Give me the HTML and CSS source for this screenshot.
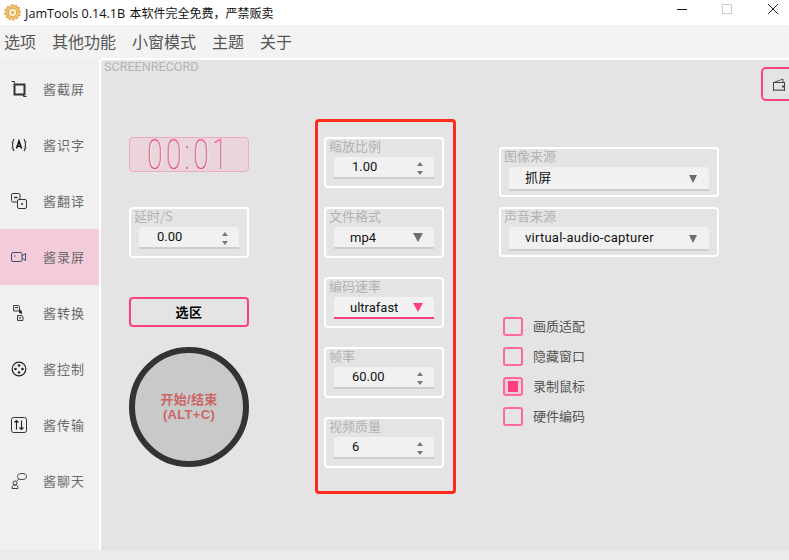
FILE: index.html
```html
<!DOCTYPE html>
<html lang="zh">
<head>
<meta charset="utf-8">
<title>JamTools</title>
<link rel="stylesheet" href="styles.css">
</head>
<body>
<div class="app">
  <header class="titlebar">
    <svg class="logo" viewBox="0 0 18 18"><path d="M9 0l1.600 2.400L13 1l.6 2.800 2.800-.2-.8 2.800 2.400 1.300-2 2.100 1.400 2.400-2.800.6-.2 2.800-2.700-.8L10 17.600l-2-2-2.300 1.400-.7-2.700-2.800.1.700-2.800L0 10.300l2-2-1.200-2.600 2.800-.5L3.500 2.400l2.700.7z" fill="#f6c468" stroke="#d08a28" stroke-width=".7"/><circle cx="9" cy="9" r="4.500" fill="#fff3cf" stroke="#cf9a48"/><circle cx="9" cy="9" r="1.800" fill="#e8b860"/></svg>
    <span class="app-title">JamTools 0.14.1B <span class="app-note">本软件完全免费，严禁贩卖</span></span>
    <div class="win-controls">
      <svg class="win-min" viewBox="0 0 10 1"><path d="M0 .5h10" stroke="#111"/></svg>
      <svg class="win-max" viewBox="0 0 10 10"><path d="M.5.500h9v9h-9z" fill="none" stroke="#ccc"/></svg>
      <svg class="win-close" viewBox="0 0 10 10"><path d="M0 0l10 10M10 0L0 10" stroke="#222" stroke-width="1"/></svg>
    </div>
  </header>
  <nav class="menubar">
    <span>选项</span><span>其他功能</span><span>小窗模式</span><span>主题</span><span>关于</span>
  </nav>
  <div class="body">
    <aside class="sidebar">
      <div class="side-item">
        <svg class="ico" viewBox="0 0 16 16"><path d="M3.500 3.500h10v10h-10z" fill="none" stroke="#333" stroke-width="2"/><path d="M.5 .5h3v2M15.500 15.500h-3v-2" fill="none" stroke="#333"/></svg>
        <span>酱截屏</span>
      </div>
      <div class="side-item">
        <svg class="ico" viewBox="0 0 16 16"><path d="M3 2C1 5 1 11 3 14M13 2c2 3 2 9 0 12" fill="none" stroke="#333" stroke-width="1.200"/><path d="M5.500 11.500L8 4l2.500 7.500M6.300 9.300h3.400" fill="none" stroke="#111" stroke-width="1.600"/><path d="M0 5h3M0 11h3M13 5h3M13 11h3" stroke="#888"/></svg>
        <span>酱识字</span>
      </div>
      <div class="side-item">
        <svg class="ico" viewBox="0 0 16 16"><rect x=".5" y=".5" width="8.500" height="8.500" rx="1.500" fill="none" stroke="#333"/><rect x="6.500" y="6.500" width="9" height="9" rx="1.500" fill="#f0f0f0" stroke="#333"/><path d="M3 4.500h3.500M10 11h2" stroke="#333" stroke-width="1.500"/></svg>
        <span>酱翻译</span>
      </div>
      <div class="side-item active">
        <svg class="ico" viewBox="0 0 16 16"><rect x=".5" y="3.500" width="10.500" height="9" rx="1.500" fill="none" stroke="#3f4d70"/><path d="M11 7l3.500-2.500v7L11 9" fill="none" stroke="#3f4d70"/><path d="M3 7h1.500" stroke="#3f4d70"/></svg>
        <span>酱录屏</span>
      </div>
      <div class="side-item">
        <svg class="ico" viewBox="0 0 16 16"><path d="M2.500.5h5l1 1.500v4h-6zM6.500 10.500h4.500l1 1.500v3.500H6.500z" fill="#ddd" stroke="#444"/><path d="M8 4.500l.2 3.500 3 1-.7-3.500z" fill="#222"/><path d="M4 2.500h3M8 13h2" stroke="#444"/></svg>
        <span>酱转换</span>
      </div>
      <div class="side-item">
        <svg class="ico" viewBox="0 0 16 16"><circle cx="8" cy="8" r="6.800" fill="none" stroke="#222" stroke-width="1.200"/><circle cx="8" cy="4.500" r="1.300" fill="#222"/><circle cx="8" cy="11.500" r="1.300" fill="#222"/><circle cx="4.500" cy="8" r="1.300" fill="#222"/><circle cx="11.500" cy="8" r="1.300" fill="#222"/></svg>
        <span>酱控制</span>
      </div>
      <div class="side-item">
        <svg class="ico" viewBox="0 0 16 16"><rect x=".5" y=".5" width="15" height="15" rx="2" fill="none" stroke="#333"/><path d="M5.500 12.500v-9M3.500 5.500l2-2 2 2M10.500 3.500v9M8.500 10.500l2 2 2-2" fill="none" stroke="#222" stroke-width="1.100"/></svg>
        <span>酱传输</span>
      </div>
      <div class="side-item">
        <svg class="ico" viewBox="0 0 16 16"><ellipse cx="11" cy="3.500" rx="4.500" ry="3" fill="none" stroke="#444"/><path d="M7.500 6L6 8" stroke="#444"/><circle cx="4" cy="10" r="2" fill="none" stroke="#444"/><path d="M1 15.500c0-2.500 1-3.500 3-3.500s3 1 3 3.500z" fill="none" stroke="#444"/></svg>
        <span>酱聊天</span>
      </div>
    </aside>
    <main class="panel">
      <div class="panel-title">SCREENRECORD</div>
      <button class="corner-tab" type="button">
        <svg viewBox="0 0 12 14"><path d="M.5 5.500L10 2v3.500" fill="none" stroke="#555"/><rect x=".5" y="5.500" width="11" height="8" fill="none" stroke="#444"/><path d="M1 13h10" stroke="#888" stroke-width="1.500"/><rect x="9" y="8.500" width="2" height="2" fill="#444"/></svg>
      </button>
      <div class="columns">
        <section class="col-left">
          <div class="lcd"><span class="lcd-text">00:01</span></div>
          <div class="group">
            <div class="group-label">延时/S</div>
            <div class="field"><span>0.00</span><i class="spin"><b class="up"></b><b class="down"></b></i></div>
          </div>
          <button class="area-btn" type="button">选区</button>
          <button class="round-btn" type="button">开始/结束<br>(ALT+C)</button>
        </section>
        <section class="col-mid">
          <div class="group">
            <div class="group-label">缩放比例</div>
            <div class="field"><span>1.00</span><i class="spin"><b class="up"></b><b class="down"></b></i></div>
          </div>
          <div class="group">
            <div class="group-label">文件格式</div>
            <div class="field select"><span>mp4</span><i class="caret"></i></div>
          </div>
          <div class="group">
            <div class="group-label">编码速率</div>
            <div class="field select focus"><span>ultrafast</span><i class="caret"></i></div>
          </div>
          <div class="group">
            <div class="group-label">帧率</div>
            <div class="field"><span>60.00</span><i class="spin"><b class="up"></b><b class="down"></b></i></div>
          </div>
          <div class="group">
            <div class="group-label">视频质量</div>
            <div class="field"><span>6</span><i class="spin"><b class="up"></b><b class="down"></b></i></div>
          </div>
        </section>
        <section class="col-right">
          <div class="group wide">
            <div class="group-label">图像来源</div>
            <div class="field select"><span>抓屏</span><i class="caret small"></i></div>
          </div>
          <div class="group wide">
            <div class="group-label">声音来源</div>
            <div class="field select"><span>virtual-audio-capturer</span><i class="caret small"></i></div>
          </div>
          <div class="checks">
            <label class="check"><i class="box"></i>画质适配</label>
            <label class="check"><i class="box"></i>隐藏窗口</label>
            <label class="check"><i class="box on"></i>录制鼠标</label>
            <label class="check"><i class="box"></i>硬件编码</label>
          </div>
        </section>
      </div>
    </main>
  </div>
  <div class="statusbar"></div>
</div>
</body>
</html>
```
FILE: styles.css
```css
* { box-sizing: border-box; }
html, body { margin: 0; padding: 0; }
body {
  width: 789px;
  height: 560px;
  overflow: hidden;
  font-family: "Liberation Sans", "Noto Sans CJK SC", sans-serif;
  background: #f0f0f0;
}
.app { display: flex; flex-direction: column; height: 560px; }

.titlebar {
  height: 25px;
  background: #fff;
  display: flex;
  align-items: center;
  padding-left: 4px;
  flex: none;
}
.logo { width: 17px; height: 17px; margin-right: 4px; }
.app-title { font-size: 12.6px; color: #111; font-family: "Open Sans", "Noto Sans CJK SC", sans-serif; }
.app-note { font-size: 12px; margin-left: 1px; }
.win-controls { margin-left: auto; align-self: flex-start; display: flex; align-items: flex-start; padding: 4px 11px 0 0; }
.win-controls svg { display: block; }
.win-min { width: 10px; height: 1px; margin: 5px 35px 0 0; }
.win-max { width: 10px; height: 10px; margin-right: 36px; }
.win-close { width: 10px; height: 10px; }

.menubar {
  height: 33px;
  background: #f3f3f3;
  display: flex;
  align-items: center;
  gap: 16px;
  padding: 0 0 2px 4px;
  font-size: 16px;
  color: #555;
  font-family: "Noto Sans CJK SC", sans-serif;
  flex: none;
}

.body { display: flex; height: 492px; flex: none; }
.sidebar { width: 99px; flex: none; background: #f0f0f0; padding-top: 3px; }
.side-item {
  height: 56px;
  display: flex;
  align-items: center;
  padding-left: 11px;
  font-size: 13px;
  letter-spacing: 1px;
  color: #6a6a6a;
  font-family: "Noto Sans CJK SC", sans-serif;
}
.side-item span { margin-bottom: 2px; }
.side-item.active { background: #f4cbd9; }
.ico { width: 16px; height: 16px; margin-right: 16px; flex: none; }

.panel {
  position: relative;
  flex: 1;
  background: #e4e4e4;
  border-top: 2px solid #fff;
  border-left: 2px solid #fff;
  border-top-left-radius: 5px;
}
.panel-title {
  font-family: Roboto, sans-serif;
  font-size: 12.6px;
  line-height: 14px;
  color: #b4b4b4;
  padding-left: 3px;
}
.corner-tab {
  position: absolute;
  top: 7px;
  right: -6px;
  width: 34px;
  height: 34px;
  padding: 0 0 0 10px;
  background: #e4e4e4;
  border: 2px solid #ff4080;
  border-radius: 5px;
  display: flex;
  align-items: center;
}
.corner-tab svg { width: 12px; height: 14px; display: block; }

.columns { display: flex; align-items: flex-start; padding: 45px 0 0 28px; }
.col-left { width: 120px; margin-top: 18px; display: flex; flex-direction: column; }
.col-mid {
  width: 141px;
  height: 375px;
  margin-left: 66px;
  border: 3px solid #ff2a1c;
  border-radius: 4px;
  padding: 15px 0 0 6px;
  display: flex;
  flex-direction: column;
  gap: 19px;
}
.col-right { width: 220px; margin-left: 43px; margin-top: 28px; display: flex; flex-direction: column; gap: 10px; }

.lcd {
  height: 35px;
  background: #ead5dd;
  border: 1px solid #f0a9bf;
  border-radius: 4px;
  margin-bottom: 35px;
  display: flex;
  justify-content: center;
  align-items: center;
}
.lcd-text {
  display: block;
  flex: none;
  color: #ff4a80;
  font-family: Roboto, sans-serif;
  font-weight: 100;
  font-size: 42px;
  line-height: 33px;
  letter-spacing: 5.500px;
  white-space: nowrap;
  transform: scaleX(0.66);
  text-shadow: 1px 0 0 #fff, -1px 0 0 #a8a8a8;
}

.group {
  width: 120px;
  height: 51px;
  border: 2px solid #fff;
  border-radius: 4px;
  padding-left: 8px;
  flex: none;
}
.group.wide { width: 220px; height: 50px; }
.group-label {
  font-size: 13px;
  line-height: 13px;
  height: 18px;
  margin-left: -5px;
  color: #b3b3b3;
  font-family: "Noto Sans CJK SC", sans-serif;
}
.wide .field { width: 200px; height: 24px; line-height: 22px; letter-spacing: 0.25px; }
.field {
  position: relative;
  width: 100px;
  height: 22px;
  background: #f1f1f1;
  border-bottom: 2px solid #cdcdcd;
  border-radius: 4px 4px 0 0;
  padding-left: 18px;
  font-size: 13px;
  line-height: 19px;
  color: #111;
  font-family: Roboto, "Noto Sans CJK SC", sans-serif;
}
.field.select { padding-left: 16px; line-height: 21px; }
.field.focus { border-bottom-color: #ff4080; }

.spin { position: absolute; right: 11px; top: 0; bottom: 0; width: 6px; }
.spin b { position: absolute; left: 0; border-left: 3px solid transparent; border-right: 3px solid transparent; }
.spin .up { top: 5px; border-bottom: 4px solid #777; }
.spin .down { bottom: 2px; border-top: 4px solid #777; }

.caret {
  position: absolute;
  right: 11px;
  top: 6px;
  border-left: 5px solid transparent;
  border-right: 5px solid transparent;
  border-top: 9px solid #6e6e6e;
}
.caret.small { top: 8px; border-left-width: 4.500px; border-right-width: 4.500px; border-top-width: 8px; right: 12px; }
.focus .caret { border-top-color: #ff4080; }

.area-btn {
  height: 30px;
  width: 120px;
  margin-top: 39px;
  background: #e4e4e4;
  border: 2px solid #ff4080;
  border-radius: 4px;
  font-family: "Noto Sans CJK SC", sans-serif;
  font-size: 13px;
  font-weight: 700;
  letter-spacing: 0.5px;
  color: #000;
  padding: 0 0 2px;
}
.round-btn {
  width: 120px;
  height: 120px;
  margin-top: 20px;
  border: 6px solid #333;
  border-radius: 50%;
  background: #c9c9c9;
  color: #cc6666;
  font-family: "Liberation Sans", "Noto Sans CJK SC", sans-serif;
  font-size: 13px;
  font-weight: 700;
  letter-spacing: 0.3px;
  line-height: 15px;
  padding: 0;
}

.checks { margin: 50px 0 0 4px; display: flex; flex-direction: column; gap: 10px; }
.check {
  display: flex;
  align-items: center;
  height: 20px;
  padding-bottom: 4px;
  font-size: 13px;
  color: #555;
  font-family: "Noto Sans CJK SC", sans-serif;
}
.box {
  width: 20px;
  height: 19px;
  margin-right: 10px;
  border: 2px solid #ff6a98;
  border-radius: 3px;
  display: block;
  position: relative;
  flex: none;
  align-self: flex-start;
}
.box.on { background: #f4cbd9; padding: 2px 3px; }
.box.on::after { content: ""; display: block; width: 10px; height: 11px; background: #ff4080; }

.statusbar { height: 10px; background: #ebebeb; flex: none; }
```
